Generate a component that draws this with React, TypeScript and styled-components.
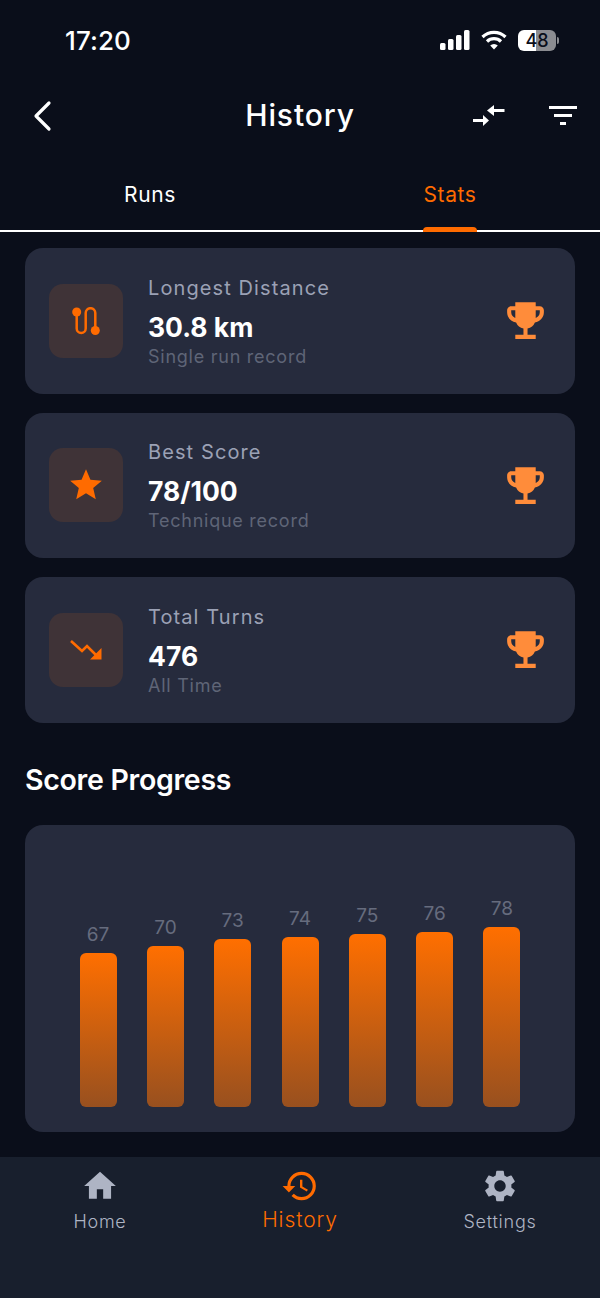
import React from "react";
import styled, { createGlobalStyle } from "styled-components";
import { MdEmojiEvents, MdHistory, MdHome, MdSettings, MdStar } from "react-icons/md";

const ORANGE = "#ff6b00";

const stats = [
    { label: "Longest Distance", value: "30.8 km", note: "Single run record", icon: <RouteIcon /> },
    { label: "Best Score", value: "78/100", note: "Technique record", icon: <MdStar size={38} color={ORANGE} /> },
    { label: "Total Turns", value: "476", note: "All Time", icon: <TurnsIcon /> },
];

const scores = [
    { value: 67, height: 154 },
    { value: 70, height: 161 },
    { value: 73, height: 168 },
    { value: 74, height: 170 },
    { value: 75, height: 173 },
    { value: 76, height: 175 },
    { value: 78, height: 180 },
];

function RouteIcon() {
    return (
        <svg width="28" height="28" viewBox="0 0 28 28" fill="none">
            <path
                d="M4.700 5v16.500a4.500 4.500 0 0 0 9 0V6a4.800 4.800 0 0 1 9.600 0v17"
                stroke={ORANGE}
                strokeWidth="2.500"
            />
            <circle cx="4.700" cy="5" r="4.500" fill={ORANGE} />
            <circle cx="23.300" cy="23.500" r="4.500" fill={ORANGE} />
        </svg>
    );
}

function TurnsIcon() {
    return (
        <svg width="32" height="20" viewBox="0 0 32 20" fill="none">
            <path d="M1 1l11 10 5-5 12 12" stroke={ORANGE} strokeWidth="2.600" />
            <path d="M20 19.500h11.500V8z" fill={ORANGE} />
        </svg>
    );
}

function SortIcon() {
    return (
        <svg width="32" height="23" viewBox="0 0 32 23" fill="none">
            <path d="M20 6.500h11.500" stroke="#fff" strokeWidth="3" />
            <path d="M14 6.500L21 1v11z" fill="#fff" />
            <path d="M0 16.500h11" stroke="#fff" strokeWidth="3" />
            <path d="M16 16.500L10 11v11z" fill="#fff" />
        </svg>
    );
}

function FilterIcon() {
    return (
        <svg width="28" height="20" viewBox="0 0 28 20" fill="#fff">
            <rect x="0" y="0" width="28" height="3" />
            <rect x="5" y="8" width="18" height="3" />
            <rect x="11" y="16" width="6" height="3" />
        </svg>
    );
}

function BackIcon() {
    return (
        <svg width="20" height="32" viewBox="0 0 20 32" fill="none">
            <path d="M16 3L3 16l13 13" stroke="#fff" strokeWidth="3.200" strokeLinecap="round" strokeLinejoin="round" />
        </svg>
    );
}

function SignalIcon() {
    return (
        <svg width="30" height="20" viewBox="0 0 30 20" fill="#fff">
            <rect x="0" y="13" width="5.500" height="7" rx="1.500" />
            <rect x="8" y="9" width="5.500" height="11" rx="1.500" />
            <rect x="16" y="5" width="5.500" height="15" rx="1.500" />
            <rect x="24" y="0" width="5.500" height="20" rx="1.500" />
        </svg>
    );
}

function WifiIcon() {
    return (
        <svg width="26" height="20" viewBox="0 0 26 20" fill="none" stroke="#fff" strokeWidth="3.200">
            <path d="M1.500 7a16.500 16.500 0 0 1 23 0" />
            <path d="M6 11.500a10 10 0 0 1 14 0" />
            <path d="M13 19.500l-3.800-4a5.400 5.400 0 0 1 7.600 0z" fill="#fff" stroke="none" />
        </svg>
    );
}

export default function App() {
    return (
        <>
            <GlobalStyle />
            <Screen>
                <StatusBar>
                    <Clock>17:20</Clock>
                    <StatusIcons>
                        <SignalIcon />
                        <WifiIcon />
                        <Battery>
                            <BatteryBody>48</BatteryBody>
                            <BatteryNub />
                        </Battery>
                    </StatusIcons>
                </StatusBar>

                <Header>
                    <BackIcon />
                    <Title>History</Title>
                    <HeaderActions>
                        <SortIcon />
                        <FilterIcon />
                    </HeaderActions>
                </Header>

                <Tabs>
                    <Tab>Runs</Tab>
                    <Tab $active>
                        Stats
                        <TabMarker />
                    </Tab>
                </Tabs>

                <Content>
                    {stats.map(stat => (
                        <StatCard key={stat.label}>
                            <StatIconBox>{stat.icon}</StatIconBox>
                            <StatText>
                                <StatLabel>{stat.label}</StatLabel>
                                <StatValue>{stat.value}</StatValue>
                                <StatNote>{stat.note}</StatNote>
                            </StatText>
                            <MdEmojiEvents size={49} color="#ff8c3a" />
                        </StatCard>
                    ))}

                    <SectionTitle>Score Progress</SectionTitle>
                    <ChartCard>
                        {scores.map(score => (
                            <BarColumn key={score.value}>
                                <BarValue>{score.value}</BarValue>
                                <Bar style={{ height: score.height }} />
                            </BarColumn>
                        ))}
                    </ChartCard>
                </Content>

                <BottomNav>
                    <NavItem>
                        <MdHome size={38} />
                        <NavLabel>Home</NavLabel>
                    </NavItem>
                    <NavItem $active>
                        <MdHistory size={38} />
                        <NavLabel $active>History</NavLabel>
                    </NavItem>
                    <NavItem>
                        <MdSettings size={38} />
                        <NavLabel>Settings</NavLabel>
                    </NavItem>
                </BottomNav>
            </Screen>
        </>
    );
}

const GlobalStyle = createGlobalStyle`
    html, body {
        margin: 0;
        padding: 0;
        background: #0a0e1a;
    }

    * {
        box-sizing: border-box;
    }
`;

const Screen = styled.div`
    width: 600px;
    height: 1298px;
    display: flex;
    flex-direction: column;
    overflow: hidden;
    background: #0a0e1a;
    color: #fff;
    font-family: Inter, "Liberation Sans", sans-serif;
`;

const StatusBar = styled.div`
    height: 76px;
    flex: none;
    display: flex;
    justify-content: space-between;
    align-items: center;
    padding: 4px 41px 0 65px;
`;

const Clock = styled.div`
    font-size: 26px;
    font-weight: 500;
    letter-spacing: 0.1px;
`;

const StatusIcons = styled.div`
    display: flex;
    align-items: center;
    gap: 11px;
`;

const Battery = styled.div`
    display: flex;
    align-items: center;
    gap: 1px;
`;

const BatteryBody = styled.div`
    width: 38px;
    height: 21px;
    border-radius: 6px;
    background: linear-gradient(90deg, #fff 48%, #8b8c91 48%);
    color: #0a0e1a;
    font-size: 18px;
    font-weight: 500;
    line-height: 21px;
    text-align: center;
`;

const BatteryNub = styled.div`
    width: 2px;
    height: 7px;
    border-radius: 0 2px 2px 0;
    background: #8b8c91;
`;

const Header = styled.div`
    height: 79px;
    flex: none;
    position: relative;
    display: flex;
    justify-content: space-between;
    align-items: center;
    padding: 0 23px 0 33px;
`;

const Title = styled.div`
    position: absolute;
    left: 0;
    right: 0;
    top: 19px;
    text-align: center;
    font-size: 30px;
    line-height: 40px;
    font-weight: 500;
    letter-spacing: 0.9px;
`;

const HeaderActions = styled.div`
    display: flex;
    align-items: center;
    gap: 44px;
`;

const Tabs = styled.div`
    height: 77px;
    flex: none;
    display: grid;
    grid-template-columns: 1fr 1fr;
    border-bottom: 2px solid #fff;
`;

const Tab = styled.div<{ $active?: boolean }>`
    position: relative;
    display: flex;
    justify-content: center;
    padding-top: 27px;
    font-size: 21px;
    font-weight: 400;
    letter-spacing: 0.6px;
    color: ${props => (props.$active ? ORANGE : "#fff")};
`;

const TabMarker = styled.div`
    position: absolute;
    left: 123px;
    bottom: -2px;
    width: 54px;
    height: 5px;
    border-radius: 4px 4px 0 0;
    background: ${ORANGE};
`;

const Content = styled.div`
    flex: 1;
    display: flex;
    flex-direction: column;
    gap: 19px;
    padding: 16px 25px 0;
`;

const StatCard = styled.div`
    height: 145.5px;
    display: flex;
    align-items: center;
    padding: 0 25px 0 24px;
    border-radius: 18px;
    background: #262b3d;
`;

const StatIconBox = styled.div`
    width: 74px;
    height: 74px;
    flex: none;
    display: flex;
    align-items: center;
    justify-content: center;
    border-radius: 14px;
    background: #3f3337;
`;

const StatText = styled.div`
    flex: 1;
    display: flex;
    flex-direction: column;
    margin-left: 25px;
    padding-top: 2px;
`;

const StatLabel = styled.div`
    font-size: 20px;
    line-height: 26px;
    letter-spacing: 1.1px;
    color: #9ba1b5;
`;

const StatValue = styled.div`
    margin-top: 10px;
    font-size: 26.5px;
    font-weight: 700;
    line-height: 32px;
`;

const StatNote = styled.div`
    margin-top: 2px;
    font-size: 18px;
    line-height: 24px;
    letter-spacing: 0.75px;
    color: #5f6577;
`;

const SectionTitle = styled.div`
    margin-top: 21.5px;
    font-size: 28.5px;
    font-weight: 600;
    line-height: 34px;
    letter-spacing: -0.3px;
`;

const ChartCard = styled.div`
    height: 306.5px;
    margin-top: 9px;
    display: flex;
    justify-content: center;
    align-items: flex-end;
    gap: 30.3px;
    padding-bottom: 24.5px;
    border-radius: 18px;
    background: #262b3d;
`;

const BarColumn = styled.div`
    width: 37px;
    display: flex;
    flex-direction: column;
    align-items: center;
    gap: 7px;
`;

const BarValue = styled.div`
    font-size: 19px;
    line-height: 22px;
    color: #666c7e;
`;

const Bar = styled.div`
    width: 37px;
    border-radius: 6px;
    background: linear-gradient(180deg, #ff6f00, #98501f);
`;

const BottomNav = styled.div`
    height: 141px;
    flex: none;
    display: grid;
    grid-template-columns: repeat(3, 1fr);
    padding-top: 10px;
    background: #181f2d;
`;

const NavItem = styled.div<{ $active?: boolean }>`
    display: flex;
    flex-direction: column;
    align-items: center;
    color: ${props => (props.$active ? ORANGE : "#aeb4c4")};
`;

const NavLabel = styled.div<{ $active?: boolean }>`
    margin-top: ${props => (props.$active ? "1px" : "3px")};
    font-size: ${props => (props.$active ? "21px" : "18px")};
    font-weight: 300;
    line-height: 28px;
    letter-spacing: ${props => (props.$active ? "0.9px" : "0.75px")};
`;
